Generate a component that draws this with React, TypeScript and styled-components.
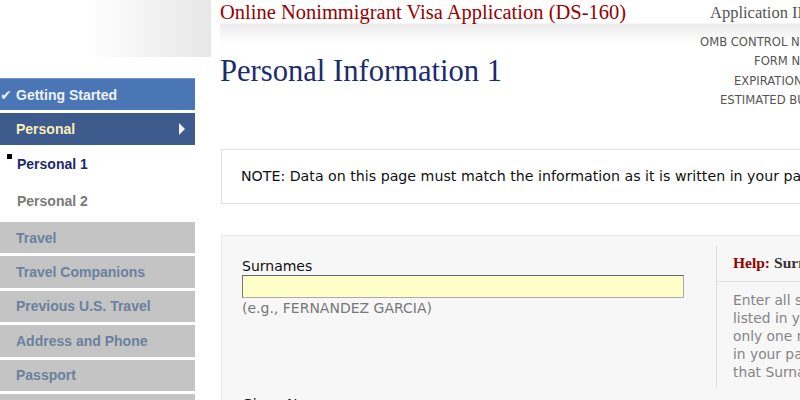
import React from "react";
import styled, { createGlobalStyle, css } from "styled-components";

const GlobalStyle = createGlobalStyle`
  html, body { margin: 0; padding: 0; background: #fff; }
  body { font-family: "DejaVu Sans", Verdana, sans-serif; }
  * { box-sizing: border-box; }
`;

const Root = styled.div`
  display: flex;
  align-items: flex-start;
  width: 800px;
  height: 400px;
  overflow: hidden;
  background: #fff;
`;

const LeftCol = styled.aside`
  width: 211px;
  flex-shrink: 0;
`;

const Logo = styled.div`
  height: 57px;
  background: linear-gradient(to right, #ffffff 0%, #ffffff 40%, #e7e7e7 100%);
`;

const Nav = styled.nav`
  margin-top: 18px;
  width: 195px;
  display: flex;
  flex-direction: column;
`;

type Variant = "done" | "current" | "todo";

const variants = {
  done: css`
    height: 32px;
    background: #4a76b6;
    color: #eef3fb;
    border-top: 1px solid #6b93cb;
  `,
  current: css`
    height: 32px;
    background: #3d5b8c;
    color: #fbefbb;
  `,
  todo: css`
    height: 31.4px;
    background: #c4c4c4;
    color: #6b819d;
  `,
};

const NavRow = styled.div<{ $variant: Variant }>`
  flex-shrink: 0;
  margin-top: 3px;
  display: flex;
  align-items: center;
  justify-content: space-between;
  padding: 0 10px 0 16px;
  font: bold 14px "Liberation Sans", Arial, sans-serif;
  white-space: nowrap;
  ${(p) => variants[p.$variant]}
`;

const NavLabel = styled.span`
  display: inline-flex;
  align-items: center;
`;

const CheckMark = styled.span`
  display: inline-block;
  width: 16px;
  margin-left: -16px;
  font: bold 14px "DejaVu Sans", sans-serif;
  color: #e8eef8;
`;

const Arrow = styled.span`
  width: 0;
  height: 0;
  border-top: 6px solid transparent;
  border-bottom: 6px solid transparent;
  border-left: 6px solid #f2f2f2;
`;

const SubItem = styled.div<{ $active?: boolean }>`
  flex-shrink: 0;
  height: 37px;
  display: flex;
  align-items: center;
  padding-left: 7px;
  font: bold 14px "Liberation Sans", Arial, sans-serif;
  color: ${(p) => (p.$active ? "#1b2a6b" : "#7a7a7a")};
`;

const Bullet = styled.span<{ $visible?: boolean }>`
  width: 5px;
  height: 5px;
  margin-right: 5px;
  align-self: flex-start;
  margin-top: 9px;
  background: ${(p) => (p.$visible ? "#000" : "transparent")};
`;

const RightCol = styled.main`
  flex: 1;
  padding-left: 9px;
`;

const Header = styled.header`
  display: grid;
  grid-template-columns: 480px auto;
  background: linear-gradient(
    to bottom,
    #ffffff 0,
    #ffffff 23px,
    #ebebeb 24px,
    #f6f6f6 34px,
    #ffffff 44px
  );
`;

const Title = styled.div`
  font: 20.5px "Liberation Serif", "Times New Roman", serif;
  line-height: 24px;
  color: #990000;
  white-space: nowrap;
`;

const AppId = styled.div`
  font: 16.5px "Liberation Serif", "Times New Roman", serif;
  line-height: 24px;
  padding: 1px 0 0 10px;
  color: #555;
  white-space: nowrap;
`;

const PageTitle = styled.h1`
  margin: 28px 0 0;
  font: normal 30.6px "Liberation Serif", "Times New Roman", serif;
  line-height: 36px;
  color: #1c2b6d;
  white-space: nowrap;
`;

const InfoBlock = styled.div`
  margin-top: 8px;
  font: 11.6px "DejaVu Sans", Verdana, sans-serif;
  line-height: 19.4px;
  color: #555;
`;

const InfoLine = styled.div<{ $indent: number }>`
  margin-left: ${(p) => p.$indent}px;
  white-space: nowrap;
`;

const NoteBox = styled.div`
  margin: 38px 0 0 1px;
  width: 620px;
  height: 55px;
  border: 1px solid #e2e2e2;
  padding-left: 19px;
  display: flex;
  align-items: center;
  font: 14.2px "DejaVu Sans", Verdana, sans-serif;
  color: #111;
  white-space: nowrap;
`;

const FormBox = styled.section`
  margin: 31px 0 0 1px;
  width: 620px;
  height: 200px;
  background: #f7f7f7;
  border: 1px solid #ebebe4;
  display: grid;
  grid-template-columns: 494px 1fr;
  align-items: start;
`;

const FieldArea = styled.div`
  padding: 22px 0 0 20px;
`;

const Label = styled.div<{ $gapTop?: number }>`
  margin-top: ${(p) => p.$gapTop ?? 0}px;
  font: 14px "DejaVu Sans", Verdana, sans-serif;
  line-height: 17px;
  color: #111;
  white-space: nowrap;
`;

const TextInput = styled.input`
  display: block;
  width: 442px;
  height: 23px;
  padding: 0 4px;
  margin: 0;
  background: #ffffc9;
  border: 1px solid #aaa;
  border-top-color: #666;
  border-left-color: #777;
  font: 14px "DejaVu Sans", Verdana, sans-serif;
  outline: none;
`;

const Hint = styled.div`
  margin-top: 1px;
  font: 14px "DejaVu Sans", Verdana, sans-serif;
  line-height: 18px;
  color: #777;
  white-space: nowrap;
`;

const HelpPanel = styled.div`
  margin-top: 10px;
  height: 142px;
  border-left: 1px solid #dcdcdc;
`;

const HelpHead = styled.div`
  height: 36px;
  border-bottom: 1px solid #e2e2e2;
  padding-left: 16px;
  display: flex;
  align-items: center;
  font: bold 15.5px "Liberation Serif", "Times New Roman", serif;
  color: #333;
  white-space: nowrap;
`;

const HelpTag = styled.span`
  color: #990000;
  margin-right: 4px;
`;

const HelpBody = styled.div`
  padding: 9px 0 0 16px;
  font: 13.8px "DejaVu Sans", Verdana, sans-serif;
  line-height: 18px;
  color: #858585;
  white-space: nowrap;
`;

const navTodo = [
  "Travel",
  "Travel Companions",
  "Previous U.S. Travel",
  "Address and Phone",
  "Passport",
  "U.S. Contact",
];

const infoLines: [string, number][] = [
  ["OMB CONTROL NO: 1405-0182", 0],
  ["FORM NO: DS-160", 54],
  ["EXPIRATION DATE: 11/30/2026", 34],
  ["ESTIMATED BURDEN: 75 MINUTES", 20],
];

const helpLines = [
  "Enter all surnames (family names) as",
  "listed in your passport. If",
  "only one name is listed",
  "in your passport, enter",
  "that Surname only.",
];

export default function App() {
  return (
    <>
      <GlobalStyle />
      <Root>
        <LeftCol>
          <Logo />
          <Nav>
            <NavRow $variant="done">
              <NavLabel>
                <CheckMark>✔</CheckMark>
                Getting Started
              </NavLabel>
            </NavRow>
            <NavRow $variant="current">
              <NavLabel>Personal</NavLabel>
              <Arrow />
            </NavRow>
            <SubItem $active>
              <Bullet $visible />
              Personal 1
            </SubItem>
            <SubItem>
              <Bullet />
              Personal 2
            </SubItem>
            {navTodo.map((t) => (
              <NavRow key={t} $variant="todo">
                <NavLabel>{t}</NavLabel>
              </NavRow>
            ))}
          </Nav>
        </LeftCol>
        <RightCol>
          <Header>
            <Title>Online Nonimmigrant Visa Application (DS-160)</Title>
            <AppId>Application ID AA00B1C2D3</AppId>
            <PageTitle>Personal Information 1</PageTitle>
            <InfoBlock>
              {infoLines.map(([t, i]) => (
                <InfoLine key={t} $indent={i}>
                  {t}
                </InfoLine>
              ))}
            </InfoBlock>
          </Header>
          <NoteBox>
            NOTE: Data on this page must match the information as it is written in your passport.
          </NoteBox>
          <FormBox>
            <FieldArea>
              <Label>Surnames</Label>
              <TextInput readOnly value="" />
              <Hint>(e.g., FERNANDEZ GARCIA)</Hint>
              <Label $gapTop={79}>Given Names</Label>
            </FieldArea>
            <HelpPanel>
              <HelpHead>
                <HelpTag>Help:</HelpTag>Surnames
              </HelpHead>
              <HelpBody>
                {helpLines.map((l) => (
                  <div key={l}>{l}</div>
                ))}
              </HelpBody>
            </HelpPanel>
          </FormBox>
        </RightCol>
      </Root>
    </>
  );
}
